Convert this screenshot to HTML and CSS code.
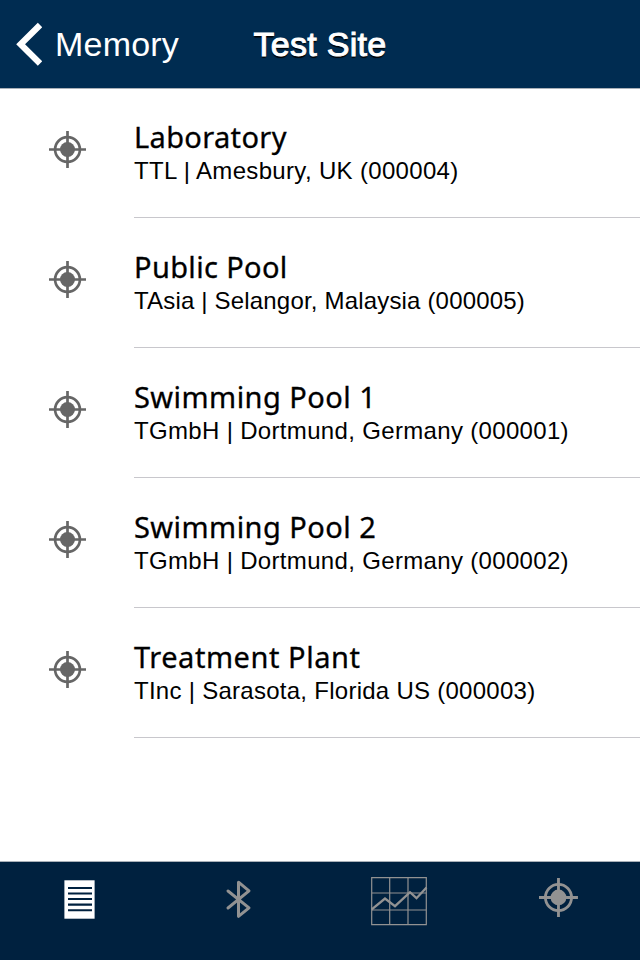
FILE: index.html
```
<!DOCTYPE html>
<html lang="en">
<head>
    <meta charset="UTF-8">
    <meta name="viewport" content="width=device-width, initial-scale=1.0">
    <title>Test Site</title>
    <link rel="stylesheet" href="styles.css">
</head>
<body>
    <!-- Shared icon -->
    <svg class="defs" width="0" height="0">
        <symbol id="target" viewBox="0 0 38 38">
            <circle cx="18.5" cy="18.5" r="7.5" fill="currentColor"/>
            <circle class="ring" cx="18.5" cy="18.5" r="12.4" fill="none" stroke="currentColor"/>
            <path d="M0 18.5H37M18.5 0V37" fill="none" stroke="currentColor" stroke-width="2.7"/>
        </symbol>
    </svg>

    <header class="navbar">
        <a class="back">
            <svg class="chevron" width="27" height="44" viewBox="0 0 27 44">
                <path d="M25 3L5.6 22.2L25 41.5" fill="none" stroke="#fff" stroke-width="6.2"/>
            </svg>
            <span>Memory</span>
        </a>
        <h1>Test Site</h1>
    </header>

    <main class="list">
        <div class="row lab">
            <svg class="row-icon"><use href="#target"/></svg>
            <div class="row-text">
                <h2>Laboratory</h2>
                <p>TTL | Amesbury, UK (000004)</p>
            </div>
        </div>
        <div class="row public">
            <svg class="row-icon"><use href="#target"/></svg>
            <div class="row-text">
                <h2>Public Pool</h2>
                <p>TAsia | Selangor, Malaysia (000005)</p>
            </div>
        </div>
        <div class="row">
            <svg class="row-icon"><use href="#target"/></svg>
            <div class="row-text">
                <h2>Swimming Pool 1</h2>
                <p>TGmbH | Dortmund, Germany (000001)</p>
            </div>
        </div>
        <div class="row">
            <svg class="row-icon"><use href="#target"/></svg>
            <div class="row-text">
                <h2>Swimming Pool 2</h2>
                <p>TGmbH | Dortmund, Germany (000002)</p>
            </div>
        </div>
        <div class="row plant">
            <svg class="row-icon"><use href="#target"/></svg>
            <div class="row-text">
                <h2>Treatment Plant</h2>
                <p>TInc | Sarasota, Florida US (000003)</p>
            </div>
        </div>
    </main>

    <nav class="tabbar">
        <a class="tab active">
            <svg width="32" height="42" viewBox="0 0 32 42">
                <rect x="0.4" y="2.3" width="30.2" height="38.4" fill="#fff"/>
                <path d="M4 10H28M4 15.5H28M4 21H28M4 26.6H28M4 32.2H28" stroke="#00213f" stroke-width="2.1"/>
            </svg>
        </a>
        <a class="tab">
            <svg width="30" height="42" viewBox="0 0 30 42">
                <path d="M3 13L24 29.8L13.5 38.3V4.2L24 12.8L3 30" fill="none" stroke="currentColor" stroke-width="3" stroke-linecap="round" stroke-linejoin="round"/>
            </svg>
        </a>
        <a class="tab">
            <svg width="58" height="49" viewBox="0 0 58 49">
                <path d="M0.7 0.7H55.3V47.7H0.7ZM18.7 0.7V47.7M37 0.7V47.7M0.7 16H55.3M0.7 33H55.3" fill="none" stroke="currentColor" stroke-width="1.2"/>
                <path d="M0.5 32.5L14 21.5L24 29.2L39 15.2L45.5 21.2L55.5 10.5" fill="none" stroke="currentColor" stroke-width="2.3"/>
            </svg>
        </a>
        <a class="tab">
            <svg class="target-tab" width="40" height="40" viewBox="0 0 39 39"><use href="#target" width="39" height="39"/></svg>
        </a>
    </nav>
</body>
</html>
```
FILE: styles.css
```
* {
    box-sizing: border-box;
    margin: 0;
    padding: 0;
}
body {
    width: 640px;
    height: 960px;
    display: flex;
    flex-direction: column;
    background: #fff;
    color: #000;
    font-family: "Liberation Sans", Arial, sans-serif;
}
.defs {
    display: none;
}
.navbar {
    height: 89px;
    display: grid;
    grid-template-columns: 1fr auto 1fr;
    align-items: center;
    background: #002c51;
    border-bottom: 1px solid #a9b0b8;
    color: #fff;
    font-size: 34px;
}
.back {
    display: flex;
    align-items: center;
    gap: 13px;
    padding-left: 15px;
    letter-spacing: 0.2px;
}
.navbar h1 {
    font-size: 34px;
    font-weight: normal;
    letter-spacing: 0.3px;
    -webkit-text-stroke: 1px #fff;
    text-shadow: 0 2px 1px #000;
}
.list {
    flex: 1;
    margin-top: -1px;
}
.row {
    height: 130px;
    display: flex;
}
.row-icon {
    flex: none;
    width: 38px;
    height: 38px;
    margin: 43px 47px 0 49px;
    color: #666;
}
.ring {
    stroke-width: 2.7px;
}
.row-text {
    flex: 1;
    padding-top: 29px;
    border-bottom: 1px solid #c8c7cc;
}
.row-text h2 {
    font-family: "Noto Sans", sans-serif;
    font-size: 29px;
    font-weight: normal;
    line-height: 40px;
    letter-spacing: 0.45px;
    -webkit-text-stroke: 0.3px #000;
}
.row-text p {
    font-size: 24px;
    line-height: 26px;
    padding-top: 1px;
    letter-spacing: 0.33px;
    white-space: nowrap;
}
.lab h2,
.public h2 {
    letter-spacing: 0.35px;
}
.public p {
    letter-spacing: 0.18px;
}
.plant h2 {
    letter-spacing: 0.55px;
}
.plant p {
    letter-spacing: 0.27px;
}
.tabbar {
    height: 99px;
    display: grid;
    grid-template-columns: repeat(4, 160px);
    background: #00213f;
    border-top: 1px solid #a9b0b8;
}
.tab {
    display: flex;
    justify-content: center;
    padding-top: 16px;
    color: #929292;
}
.tab:nth-child(3) {
    padding-top: 15px;
}
.tab:last-child {
    padding-right: 2px;
}
```
